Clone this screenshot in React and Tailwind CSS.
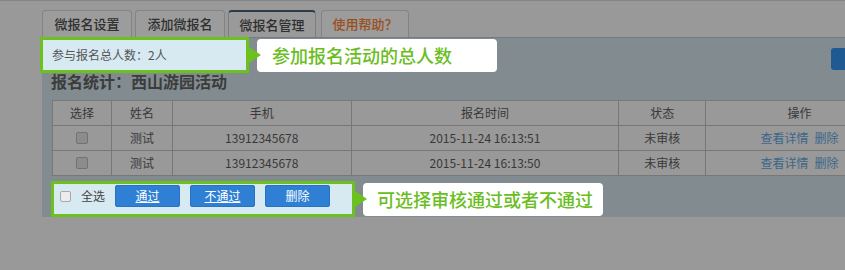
import React from "react";

const F = "font-['Noto_Sans_CJK_SC','Liberation_Sans',sans-serif]";

const cols = [
  { w: "w-[59px]", label: "选择" },
  { w: "w-[61px]", label: "姓名" },
  { w: "w-[179px]", label: "手机" },
  { w: "w-[268px]", label: "报名时间" },
  { w: "w-[87px]", label: "状态" },
  { w: "w-[188px]", label: "操作" },
];

const rows = [
  { name: "测试", phone: "13912345678", time: "2015-11-24 16:13:51", status: "未审核" },
  { name: "测试", phone: "13912345678", time: "2015-11-24 16:13:50", status: "未审核" },
];

function Arrow() {
  return (
    <svg width="12" height="16" viewBox="0 0 12 16" className="relative z-10 shrink-0">
      <polygon points="0,0 12,8 0,16" fill="#6cc11f" />
    </svg>
  );
}

function Tab({ children, active, className = "" }) {
  return (
    <div
      className={`h-[27px] flex items-center justify-center rounded-t-[4px] border border-b-0 text-[13px] font-medium ${
        active ? "border-[#7e7e7e] border-t-2 border-t-[#2d3a48] bg-[#9a9a9a]" : "border-[#838383] bg-[#9c9c9c]"
      } ${className}`}
    >
      {children}
    </div>
  );
}

function Cell({ w, children, className = "" }) {
  return (
    <div className={`${w} h-full flex items-center justify-center border-r border-[#777] ${className}`}>
      {children}
    </div>
  );
}

function Check() {
  return <div className="w-[12px] h-[12px] rounded-[2px] border border-[#727272] bg-[#8c8c8c]" />;
}

export default function App() {
  return (
    <div className={`w-[845px] h-[270px] overflow-hidden bg-[#999999] border-t border-[#858585] ${F} text-[12px] text-[#383838]`}>
      {/* tabs */}
      <div className="flex pl-[42px] pt-[9px]">
        <Tab className="w-[90px] text-[#2f2f2f]">微报名设置</Tab>
        <Tab className="w-[90px] ml-[3px] text-[#2f2f2f]">添加微报名</Tab>
        <Tab active className="w-[88px] ml-[3px] text-[#2f2f2f]">微报名管理</Tab>
        <Tab className="w-[88px] ml-[5px] text-[#9a4f1c]">使用帮助？</Tab>
      </div>

      {/* panel */}
      <div className="ml-[42px] w-[860px] h-[180px] bg-[#818b90] border-t border-[#757c80] flex flex-col">
        {/* row 1 */}
        <div className="flex items-center -mt-[1px] h-[36px]">
          <div className="-ml-[2px] w-[209px] h-[36px] border-[3px] border-[#6cc11f] bg-[#d7e9f1] flex items-center pl-[9px] text-[12px] text-[#555]">
            参与报名总人数：2人
          </div>
          <Arrow />
          <div className="-ml-[4px] w-[240px] h-[33px] rounded-[4px] bg-white flex items-center pl-[15px] text-[18px] font-medium text-[#6abd22]">
            参加报名活动的总人数
          </div>
          <div className="ml-[334px] self-start mt-[11px] w-[60px] h-[22px] rounded-[3px] bg-[#1f5a92]" />
        </div>

        {/* title */}
        <div className="-mt-[1px] ml-[9px] leading-[18px] text-[16px] font-bold text-[#3c3c3c]">
          报名统计：西山游园活动
        </div>

        {/* table */}
        <div className="mt-[10px] ml-[10px] w-[842px] border-t border-l border-[#777] bg-[#999999]">
          <div className="flex h-[25px] border-b border-[#777]">
            {cols.map((c) => (
              <Cell key={c.label} w={c.w}>
                {c.label}
              </Cell>
            ))}
          </div>
          {rows.map((r, i) => (
            <div key={i} className="flex h-[25px] border-b border-[#777]">
              <Cell w={cols[0].w}>
                <Check />
              </Cell>
              <Cell w={cols[1].w}>{r.name}</Cell>
              <Cell w={cols[2].w}>{r.phone}</Cell>
              <Cell w={cols[3].w}>{r.time}</Cell>
              <Cell w={cols[4].w}>{r.status}</Cell>
              <Cell w={cols[5].w} className="gap-[6px] text-[#3b6688]">
                <span>查看详情</span>
                <span>删除</span>
              </Cell>
            </div>
          ))}
        </div>

        {/* bottom row */}
        <div className="flex items-center mt-[5px] ml-[9px]">
          <div className="w-[304px] h-[36px] border-[3px] border-[#6cc11f] bg-[#d7e9f1] flex items-start pl-[6px] pt-[1px]">
            <div className="flex items-center h-[22px]">
              <div className="w-[11px] h-[11px] rounded-[2px] border border-[#a9a9a9] bg-[#ececec]" />
              <span className="ml-[10px] text-[#444]">全选</span>
              <div className="ml-[10px] w-[65px] h-[22px] rounded-[2px] bg-[#2f80d5] border border-[#2a73c0] text-white flex items-center justify-center underline">
                通过
              </div>
              <div className="ml-[10px] w-[65px] h-[22px] rounded-[2px] bg-[#2f80d5] border border-[#2a73c0] text-white flex items-center justify-center underline">
                不通过
              </div>
              <div className="ml-[10px] w-[65px] h-[22px] rounded-[2px] bg-[#2f80d5] border border-[#2a73c0] text-white flex items-center justify-center">
                删除
              </div>
            </div>
          </div>
          <Arrow />
          <div className="-ml-[4px] w-[240px] h-[33px] rounded-[4px] bg-white flex items-center pl-[14px] text-[18px] font-medium text-[#6abd22]">
            可选择审核通过或者不通过
          </div>
        </div>
      </div>
    </div>
  );
}
